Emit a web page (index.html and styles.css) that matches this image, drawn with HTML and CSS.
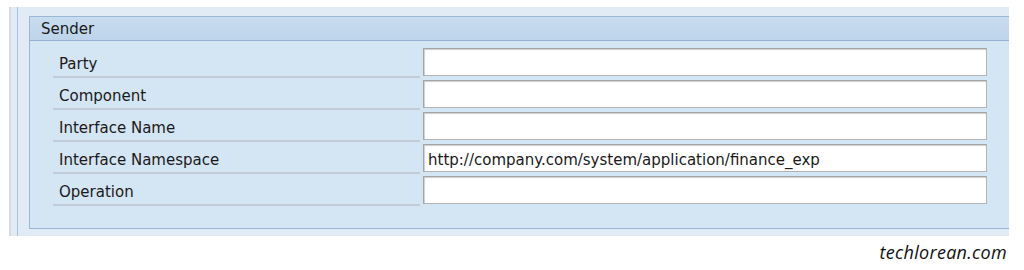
FILE: index.html
```html
<!DOCTYPE html>
<html>
<head>
<meta charset="utf-8">
<link rel="stylesheet" href="styles.css">
</head>
<body>
<div class="outer">
  <div class="rail">
    <div class="panel">
      <div class="panel-head">Sender</div>
      <div class="panel-body">
        <div class="row"><div class="label">Party</div><div class="field"></div></div>
        <div class="row"><div class="label">Component</div><div class="field"></div></div>
        <div class="row"><div class="label">Interface Name</div><div class="field"></div></div>
        <div class="row"><div class="label">Interface Namespace</div><div class="field">http://company.com/system/application/finance_exp</div></div>
        <div class="row"><div class="label">Operation</div><div class="field"></div></div>
      </div>
    </div>
  </div>
</div>
<div class="credit">techlorean.com</div>
</body>
</html>
```

FILE: styles.css
```css
html, body {
  margin: 0;
  padding: 0;
  background: #ffffff;
}
body {
  width: 1024px;
  height: 270px;
  overflow: hidden;
  font-family: "DejaVu Sans", Verdana, sans-serif;
  color: #1a1a1a;
}
.outer {
  margin: 7px 0 0 9px;
  width: 1000px;
  height: 229px;
  background: #e0ebf5;
  border-left: 2px solid #d4dbe2;
  box-sizing: border-box;
}
.rail {
  margin-left: 6px;
  height: 100%;
  border-left: 1px solid #a9c3df;
  padding: 9px 0 0 11px;
  box-sizing: border-box;
}
.panel {
  height: 213px;
  border: 1px solid #9ab7d8;
  border-right: none;
  background: #d4e5f4;
  box-sizing: border-box;
}
.panel-head {
  height: 24px;
  box-sizing: border-box;
  border-bottom: 1px solid #93b2d5;
  background: linear-gradient(#c8dcef, #bdd4ea);
  font-size: 15px;
  line-height: 24px;
  padding-left: 11px;
  color: #1a1a1a;
}
.panel-body {
  padding: 7px 0 0 23px;
  display: flex;
  flex-direction: column;
}
.row {
  display: flex;
  height: 32px;
  gap: 3px;
}
.label {
  width: 367px;
  height: 30px;
  box-sizing: border-box;
  border-bottom: 2px solid #c2ccd6;
  padding: 2px 0 0 6px;
  font-size: 15px;
  line-height: 28px;
}
.field {
  width: 564px;
  height: 28px;
  box-sizing: border-box;
  background: #ffffff;
  border: 1px solid #b4b4b4;
  border-top-color: #a4a4a4;
  border-left-color: #a4a4a4;
  box-shadow: inset 1px 1px 1px #cfcfcf;
  font-size: 15px;
  line-height: 28px;
  padding: 1px 0 0 4px;
  white-space: nowrap;
}
.credit {
  width: 1007px;
  text-align: right;
  margin-top: 4px;
  font-family: "Open Sans", sans-serif;
  font-style: italic;
  font-size: 18px;
  letter-spacing: 0.3px;
  color: #111;
}
```
